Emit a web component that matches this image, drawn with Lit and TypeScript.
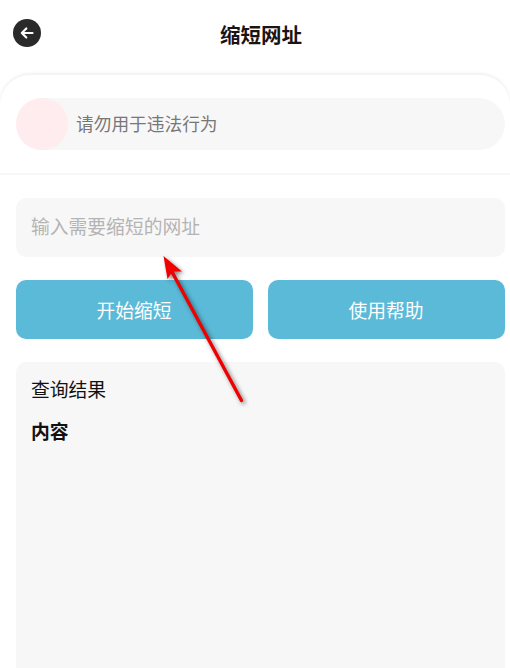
import { LitElement, html, css } from "lit";
import { customElement } from "lit/decorators.js";

@customElement("app-root")
export class AppRoot extends LitElement {
  static styles = css`
    :host {
      display: block;
      position: relative;
      width: 510px;
      height: 668px;
      overflow: hidden;
      background: #fff;
      font-family: "Roboto", "Noto Sans CJK SC", sans-serif;
    }
    .header {
      height: 75px;
      display: grid;
      grid-template-columns: 1fr;
      align-items: center;
      justify-items: center;
      padding: 0 0 8px 0;
      box-sizing: border-box;
      position: relative;
    }
    .back {
      position: absolute;
      left: 13px;
      top: 19px;
      width: 28px;
      height: 28px;
    }
    .title {
      font-size: 20.5px;
      font-weight: 700;
      color: #1c1212;
      padding-left: 12px;
      line-height: 28px;
      margin-top: 4px;
    }
    .sheet {
      border-radius: 30px 30px 0 0;
      box-shadow: 0 -2px 3px rgba(0, 0, 0, 0.06);
      background: #fff;
      height: 593px;
    }
    .notice-wrap {
      padding: 23px 5px 23px 16px;
      border-bottom: 2px solid #f7f7f7;
      margin-bottom: 23px;
    }
    .notice {
      height: 52px;
      border-radius: 26px;
      background: #f7f7f7;
      display: flex;
      align-items: center;
      gap: 9px;
      font-size: 17.7px;
      color: #777;
    }
    .notice span {
      margin-top: -2px;
      margin-left: -1px;
    }
    .dot {
      width: 52px;
      height: 52px;
      border-radius: 50%;
      background: #ffecef;
      flex: none;
    }
    .body {
      padding: 0 5px 0 16px;
      display: flex;
      flex-direction: column;
      gap: 23px;
    }
    .input {
      height: 59px;
      border-radius: 10px;
      background: #f7f7f7;
      display: flex;
      align-items: center;
      padding: 0 0 4px 15px;
      box-sizing: border-box;
      font-size: 18.8px;
      color: #b4b4b4;
    }
    .buttons {
      display: grid;
      grid-template-columns: 237px 237px;
      gap: 15px;
    }
    .btn {
      height: 59px;
      border-radius: 10px;
      background: #5abad8;
      color: #fff;
      font-size: 18.8px;
      display: flex;
      align-items: center;
      justify-content: center;
      box-sizing: border-box;
      padding-right: 1px;
    }
    .result {
      height: 320px;
      border-radius: 10px 10px 0 0;
      background: #f7f7f7;
      padding: 15px 15px;
      box-sizing: border-box;
      color: #111;
      font-size: 18.8px;
    }
    .result-title {
      line-height: 29px;
    }
    .result-content {
      font-weight: 700;
      line-height: 29px;
      margin-top: 13px;
    }
    .arrow {
      position: absolute;
      left: 0;
      top: 0;
      pointer-events: none;
      overflow: visible;
      filter: drop-shadow(2px 2px 2px rgba(0, 0, 0, 0.5));
    }
  `;

  render() {
    return html`
      <div class="header">
        <svg class="back" viewBox="0 0 28 28">
          <circle cx="14" cy="14" r="14" fill="#2a2a2a" />
          <path
            d="M19.500 14H9M13.300 9.500L8.800 14l4.500 4.500"
            fill="none"
            stroke="#fff"
            stroke-width="2.2"
            stroke-linecap="round"
            stroke-linejoin="round"
          />
        </svg>
        <div class="title">缩短网址</div>
      </div>
      <div class="sheet">
        <div class="notice-wrap">
          <div class="notice">
            <div class="dot"></div>
            <span>请勿用于违法行为</span>
          </div>
        </div>
        <div class="body">
          <div class="input">输入需要缩短的网址</div>
          <div class="buttons">
            <div class="btn">开始缩短</div>
            <div class="btn">使用帮助</div>
          </div>
          <div class="result">
            <div class="result-title">查询结果</div>
            <div class="result-content">内容</div>
          </div>
        </div>
      </div>
      <svg class="arrow" width="510" height="668" viewBox="0 0 510 668">
        <path d="M241.500 400.500L171 270" stroke="#f00000" stroke-width="3.400" stroke-linecap="round" fill="none" />
        <path d="M163.500 256L182 271.500L172.500 271.500L167.500 279Z" fill="#f00000" />
      </svg>
    `;
  }
}
